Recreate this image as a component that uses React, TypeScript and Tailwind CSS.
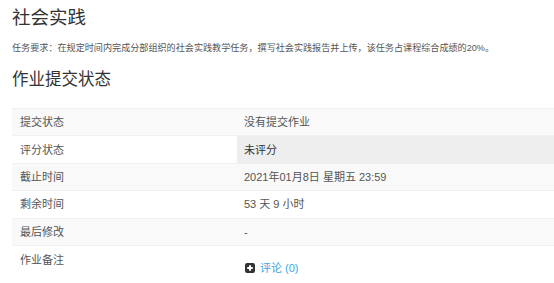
import { Fragment } from 'react'

interface Row {
  label: string
  value: string
  striped: boolean
  active?: boolean
}

const rows: Row[] = [
  { label: '提交状态', value: '没有提交作业', striped: true },
  { label: '评分状态', value: '未评分', striped: false, active: true },
  { label: '截止时间', value: '2021年01月8日 星期五 23:59', striped: true },
  { label: '剩余时间', value: '53 天 9 小时', striped: false },
  { label: '最后修改', value: '-', striped: true },
]

function PlusSquare() {
  return (
    <svg width="10" height="10" viewBox="0 0 10 10" className="shrink-0">
      <rect x="0" y="0" width="10" height="10" rx="2" fill="#333" />
      <path d="M5 2.2v5.6M2.2 5h5.6" stroke="#fff" strokeWidth="2" />
    </svg>
  )
}

export default function App() {
  return (
    <div
      className="w-[554px] h-[283px] overflow-hidden bg-white pl-3 text-[#555]"
      style={{ fontFamily: '"Liberation Sans", "Noto Sans CJK SC", sans-serif' }}
    >
      <h1 className="pt-[5px] text-[18.5px] leading-[26px] text-[#333]">社会实践</h1>
      <p className="mt-[10px] text-[9.1px] leading-[14px] text-[#555]">
        任务要求：在规定时间内完成分部组织的社会实践教学任务，撰写社会实践报告并上传，该任务占课程综合成绩的20%。
      </p>
      <h2 className="mt-[12px] text-[16.5px] leading-[24px] text-[#333]">作业提交状态</h2>

      <table className="mt-[17px] w-full border-collapse text-[11px] leading-[14px]">
        <tbody>
          {rows.map((row) => (
            <Fragment key={row.label}>
              <tr className={row.striped ? 'bg-[#f9f9f9]' : 'bg-white'}>
                <td className="h-[27.4px] w-[225px] border-t border-[#f0f0f0] pl-2 align-middle">
                  {row.label}
                </td>
                <td
                  className={
                    'h-[27.4px] border-t border-[#f0f0f0] pl-[7px] align-middle ' +
                    (row.active ? 'bg-[#eeeeee] text-[#333]' : '')
                  }
                >
                  {row.value}
                </td>
              </tr>
            </Fragment>
          ))}
          <tr>
            <td className="h-[40px] border-t border-[#f0f0f0] pl-2 pt-[7px] align-top">作业备注</td>
            <td className="border-t border-[#f0f0f0] pl-[8px] pt-[15px] align-top">
              <a href="#" className="flex items-center gap-[5px] text-[#3ba7e2]">
                <PlusSquare />
                <span>评论 (0)</span>
              </a>
            </td>
          </tr>
        </tbody>
      </table>
    </div>
  )
}
